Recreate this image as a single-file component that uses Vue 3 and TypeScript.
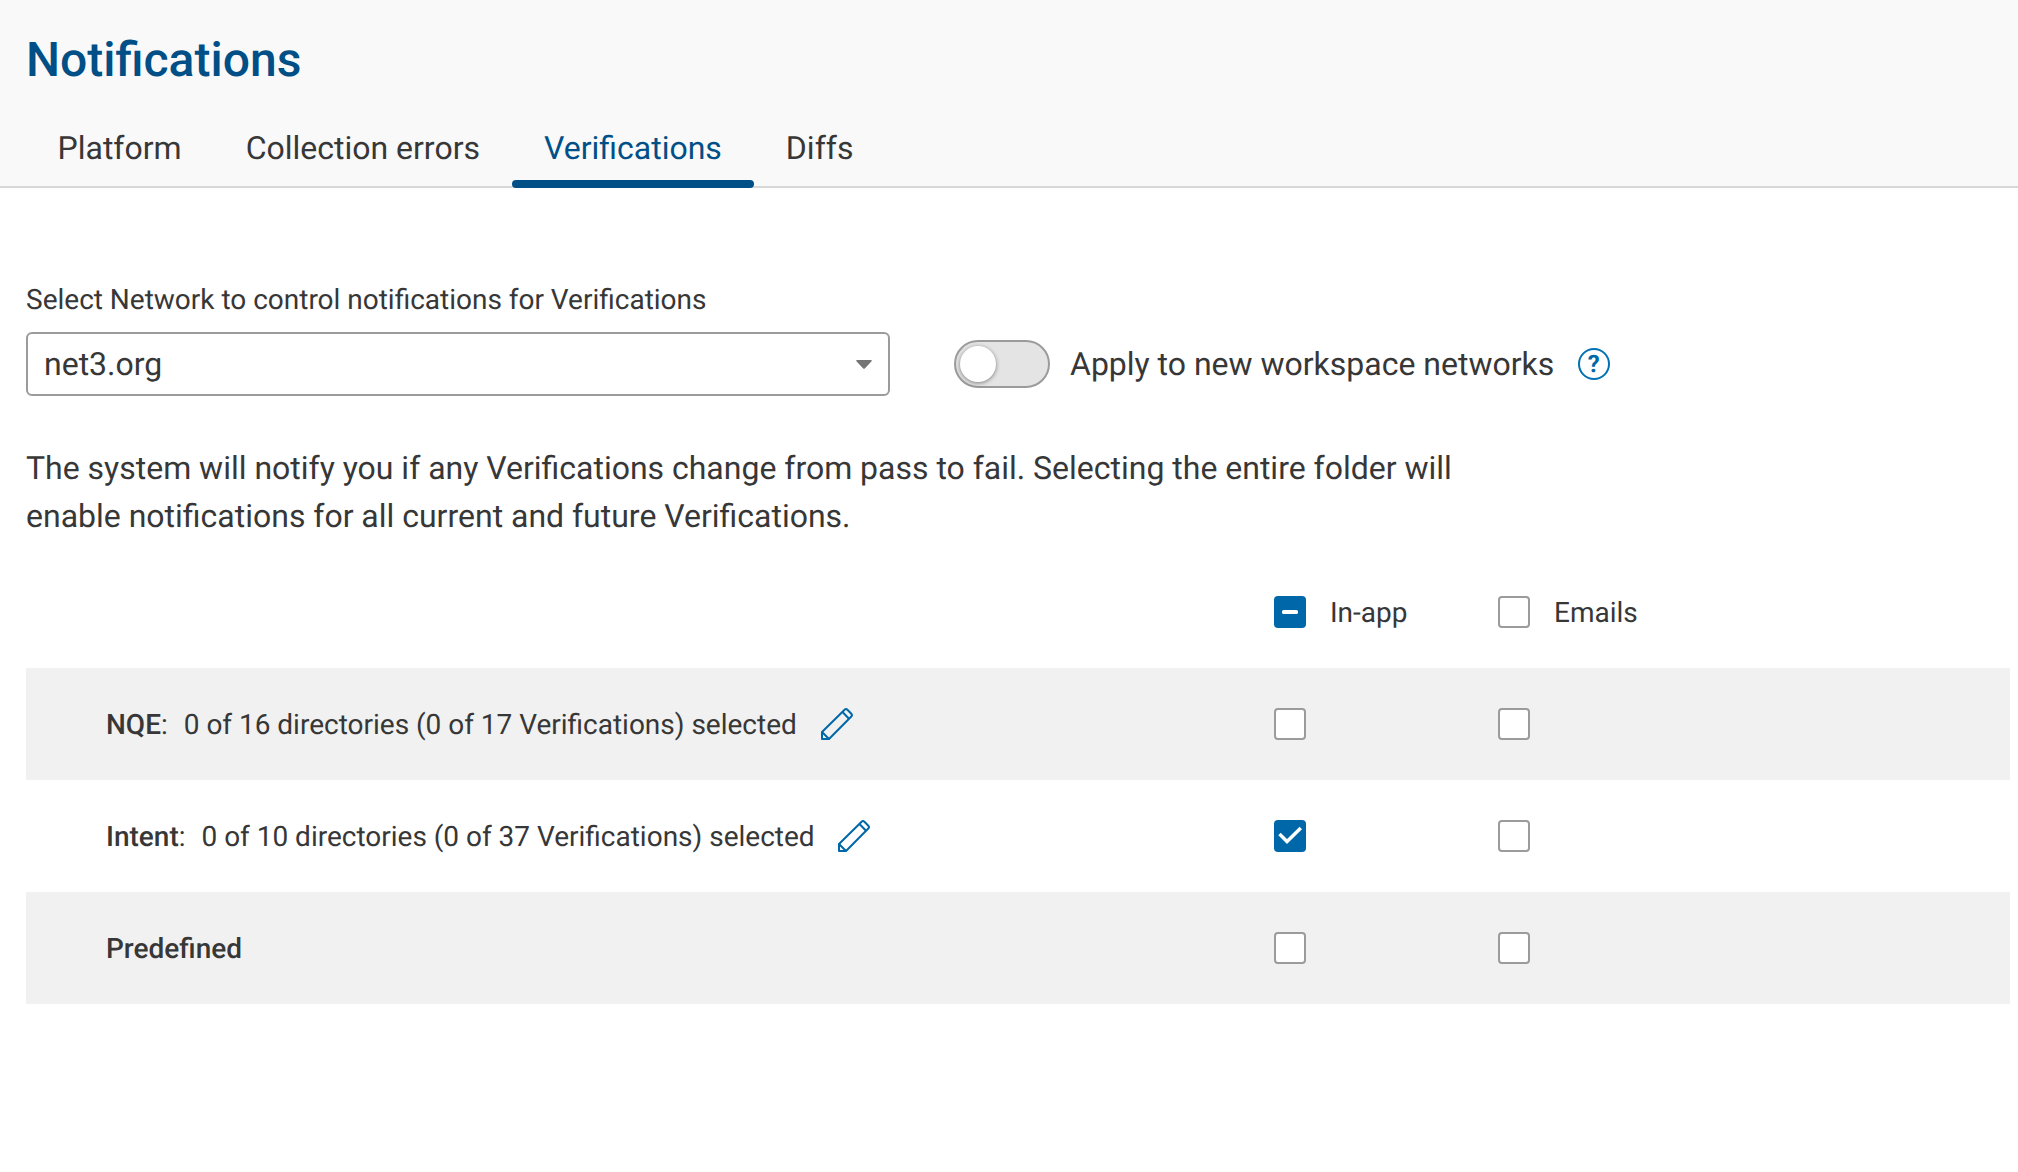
<script setup lang="ts">
import { ref } from 'vue'

type CheckState = 'on' | 'off' | 'mixed'

interface Row {
  name: string
  summary?: string
  checks: CheckState[]
}

const tabs: string[] = ['Platform', 'Collection errors', 'Verifications', 'Diffs']
const activeTab = ref('Verifications')

const columns: { label: string; state: CheckState }[] = [
  { label: 'In-app', state: 'mixed' },
  { label: 'Emails', state: 'off' },
]

const rows: Row[] = [
  { name: 'NQE', summary: '0 of 16 directories (0 of 17 Verifications) selected', checks: ['off', 'off'] },
  { name: 'Intent', summary: '0 of 10 directories (0 of 37 Verifications) selected', checks: ['on', 'off'] },
  { name: 'Predefined', checks: ['off', 'off'] },
]
</script>

<template>
  <div class="page">
    <header class="header">
      <h1 class="title">Notifications</h1>
      <nav class="tabs">
        <a
          v-for="tab in tabs"
          :key="tab"
          class="tab"
          :class="{ active: tab === activeTab }"
          @click="activeTab = tab"
        >{{ tab }}</a>
      </nav>
    </header>

    <main class="content">
      <div class="label">Select Network to control notifications for Verifications</div>
      <div class="controls">
        <div class="select">
          <span>net3.org</span>
          <svg class="arrow" width="16" height="9" viewBox="0 0 16 9">
            <path d="M1 0H15Q16.4 0.4 15.4 1.5L9 8.3Q8 9.4 7 8.3L0.6 1.5Q-0.4 0.4 1 0Z" fill="#757575" />
          </svg>
        </div>
        <div class="switch"><div class="knob"></div></div>
        <span class="switch-label">Apply to new workspace networks</span>
        <span class="help">?</span>
      </div>

      <p class="description">
        The system will notify you if any Verifications change from pass to fail. Selecting the entire folder will<br />
        enable notifications for all current and future Verifications.
      </p>

      <div class="table">
        <div class="row head">
          <div class="name"></div>
          <div v-for="col in columns" :key="col.label" class="cell">
            <span class="box" :class="col.state"><i v-if="col.state === 'mixed'" class="dash"></i></span>
            <span class="col-label">{{ col.label }}</span>
          </div>
        </div>
        <div v-for="row in rows" :key="row.name" class="row">
          <div class="name">
            <span><b>{{ row.name }}</b><template v-if="row.summary">:</template></span>
            <template v-if="row.summary">
              <span class="summary">{{ row.summary }}</span>
              <svg class="pencil" width="32" height="32" viewBox="0 0 32 32" fill="none" stroke="#0067a8" stroke-width="2" stroke-linejoin="round">
                <path d="M1 31V24L23.6 1.7Q25 0.4 26.4 1.7L30.3 5.8Q31.6 7.2 30.3 8.5L8 31Z" />
                <path d="M1 24L8 31M21.5 4L28 10.7" />
              </svg>
            </template>
          </div>
          <div v-for="(state, i) in row.checks" :key="i" class="cell">
            <span class="box" :class="state">
              <svg v-if="state === 'on'" width="32" height="32" viewBox="0 0 32 32" fill="none">
                <path d="M5.5 14L13 21.5L26.8 8" stroke="#fff" stroke-width="3.4" />
              </svg>
            </span>
          </div>
        </div>
      </div>
    </main>
  </div>
</template>

<style>
body {
  background: #fff;
}
</style>

<style scoped>
.page {
  box-sizing: border-box;
  min-height: 1172px;
  background: #fff;
  color: #373737;
  font-family: Roboto, sans-serif;
  font-size: 28px;
  text-rendering: geometricPrecision;
  word-spacing: -0.06px;
}
.header {
  box-sizing: border-box;
  height: 188px;
  padding: 28px 26px 0;
  background: #f9f9f9;
  border-bottom: 2px solid #d8d8d8;
}
.title {
  margin: 0;
  font-size: 48px;
  line-height: 64px;
  font-weight: 500;
  color: #004f86;
}
.tabs {
  display: flex;
  height: 96px;
  margin-left: -0.5px;
}
.tab {
  box-sizing: border-box;
  height: 96px;
  padding: 32px 32px 0;
  font-size: 32px;
  line-height: 48px;
  white-space: nowrap;
}
.tab.active {
  color: #004f86;
}
.tab.active::after {
  content: '';
  display: block;
  height: 8px;
  margin: 8px -32px 0;
  border-radius: 4px;
  background: #004f86;
}
.content {
  padding: 92px 8px 0 26px;
}
.label {
  line-height: 40px;
}
.controls {
  display: flex;
  align-items: center;
  margin-top: 12px;
  font-size: 32px;
}
.select {
  box-sizing: border-box;
  display: flex;
  align-items: center;
  justify-content: space-between;
  width: 864px;
  height: 64px;
  padding: 0 16px;
  border: 2px solid #9b9b9b;
  border-radius: 6px;
}
.switch {
  box-sizing: border-box;
  width: 96px;
  height: 48px;
  margin-left: 64px;
  padding: 4px;
  border: 2px solid #9b9b9b;
  border-radius: 24px;
  background: #e4e4e4;
}
.knob {
  width: 36px;
  height: 36px;
  border-radius: 50%;
  background: #fff;
  box-shadow: 0 1px 4px rgba(0, 0, 0, 0.45);
}
.switch-label {
  margin-left: 20px;
}
.help {
  box-sizing: border-box;
  width: 32px;
  height: 32px;
  margin-left: 23.5px;
  border: 2px solid #0072b5;
  border-radius: 50%;
  color: #0067a8;
  font-size: 24px;
  font-weight: 700;
  line-height: 28px;
  text-align: center;
}
.description {
  margin: 48px 0 0;
  font-size: 32px;
  line-height: 48px;
}
.table {
  margin-top: 16px;
}
.row {
  display: flex;
  align-items: center;
  height: 112px;
}
.row:nth-child(even) {
  background: #f1f1f1;
}
.name {
  box-sizing: border-box;
  display: flex;
  align-items: center;
  width: 1248px;
  padding-left: 80px;
}
.name b {
  font-weight: 500;
}
.summary {
  margin-left: 16px;
}
.pencil {
  margin-left: 23.7px;
}
.cell {
  display: flex;
  align-items: center;
  width: 224px;
}
.col-label {
  margin-left: 24px;
}
.box {
  box-sizing: border-box;
  display: flex;
  align-items: center;
  justify-content: center;
  width: 32px;
  height: 32px;
  border: 2px solid #9b9b9b;
  border-radius: 4px;
  background: #fff;
}
.box.on,
.box.mixed {
  border: 0;
  background: #0067a8;
}
.dash {
  width: 16px;
  height: 4px;
  border-radius: 1.5px;
  background: #fff;
}
</style>
